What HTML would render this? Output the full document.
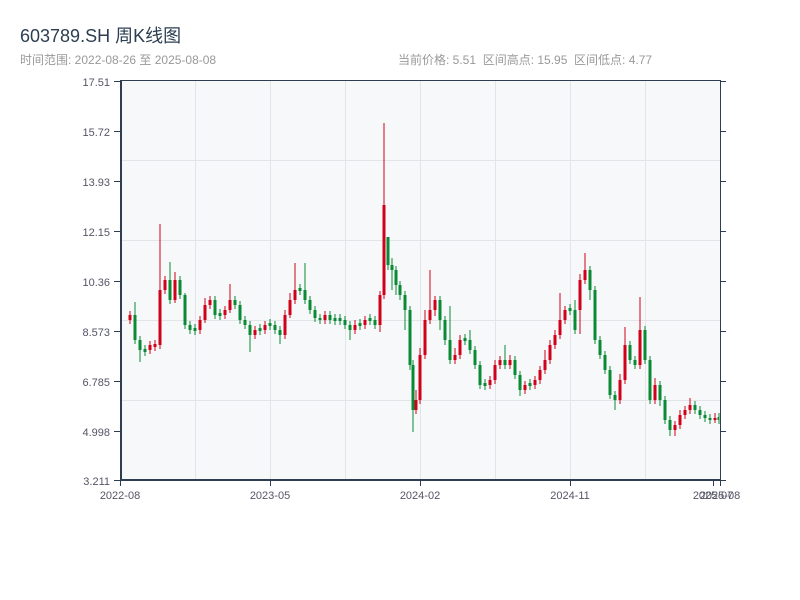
<!DOCTYPE html>
<html><head><meta charset="utf-8"><style>
body{margin:0;width:800px;height:600px;background:#fff;overflow:hidden;font-family:"Liberation Sans","Noto Sans CJK SC",sans-serif}
.t{position:absolute;left:20px;top:22px;font-size:18px;color:#2c3e50}
.s{position:absolute;top:51px;font-size:12px;color:#999}
svg{position:absolute;left:0;top:0}
</style></head><body>
<div class="t">603789.SH 周K线图</div>
<div class="s" style="left:20px">时间范围: 2022-08-26 至 2025-08-08</div>
<div class="s" style="left:398px">当前价格: 5.51 &nbsp;区间高点: 15.95 &nbsp;区间低点: 4.77</div>
<svg width="800" height="600" xmlns="http://www.w3.org/2000/svg" font-family="Liberation Sans, sans-serif" font-size="11" fill="#556">
<rect x="121" y="80" width="599" height="400" fill="#f7f8fa"/>
<g stroke="#e2e4e8" stroke-width="1">
<line x1="195.5" y1="80" x2="195.5" y2="480"/><line x1="270.5" y1="80" x2="270.5" y2="480"/><line x1="345.5" y1="80" x2="345.5" y2="480"/><line x1="420.5" y1="80" x2="420.5" y2="480"/><line x1="495.5" y1="80" x2="495.5" y2="480"/><line x1="570.5" y1="80" x2="570.5" y2="480"/><line x1="645.5" y1="80" x2="645.5" y2="480"/>
<line x1="121" y1="160.5" x2="720" y2="160.5"/><line x1="121" y1="240.5" x2="720" y2="240.5"/><line x1="121" y1="320.5" x2="720" y2="320.5"/><line x1="121" y1="400.5" x2="720" y2="400.5"/>
</g>
<path fill="#d0021b" d="
M128.5 315h3v5h-3z M129.5 311h1v13h-1z
M148.5 345h3v5h-3z M149.5 341h1v13h-1z
M153.5 344h3v3h-3z M154.5 340h1v11h-1z
M158.5 290h3v55h-3z M159.5 224h1v125h-1z
M163.5 280h3v10h-3z M164.5 276h1v18h-1z
M173.5 280h3v20h-3z M174.5 272h1v31h-1z
M198.5 320h3v10h-3z M199.5 316h1v18h-1z
M203.5 305h3v15h-3z M204.5 298h1v25h-1z
M208.5 300h3v5h-3z M209.5 296h1v13h-1z
M223.5 310h3v5h-3z M224.5 306h1v13h-1z
M228.5 300h3v10h-3z M229.5 284h1v29h-1z
M253.5 330h3v5h-3z M254.5 326h1v13h-1z
M263.5 325h3v5h-3z M264.5 321h1v13h-1z
M283.5 315h3v20h-3z M284.5 310h1v29h-1z
M288.5 300h3v15h-3z M289.5 293h1v25h-1z
M293.5 290h3v10h-3z M294.5 263h1v41h-1z
M323.5 315h3v5h-3z M324.5 311h1v13h-1z
M353.5 325h3v5h-3z M354.5 320h1v14h-1z
M363.5 320h3v5h-3z M364.5 316h1v13h-1z
M378.5 295h3v30h-3z M379.5 291h1v41h-1z
M382.5 205h3v90h-3z M383.5 123h1v176h-1z
M414.5 400h3v10h-3z M415.5 390h1v24h-1z
M418.5 355h3v45h-3z M419.5 348h1v56h-1z
M423.5 320h3v35h-3z M424.5 310h1v49h-1z
M428.5 310h3v10h-3z M429.5 270h1v54h-1z
M433.5 300h3v10h-3z M434.5 296h1v20h-1z
M453.5 355h3v5h-3z M454.5 348h1v16h-1z
M458.5 340h3v15h-3z M459.5 335h1v24h-1z
M488.5 380h3v5h-3z M489.5 376h1v13h-1z
M493.5 365h3v15h-3z M494.5 360h1v24h-1z
M498.5 360h3v5h-3z M499.5 356h1v13h-1z
M508.5 360h3v5h-3z M509.5 355h1v14h-1z
M523.5 385h3v5h-3z M524.5 381h1v13h-1z
M533.5 380h3v5h-3z M534.5 376h1v13h-1z
M538.5 370h3v10h-3z M539.5 366h1v18h-1z
M543.5 360h3v10h-3z M544.5 350h1v24h-1z
M548.5 345h3v15h-3z M549.5 340h1v24h-1z
M553.5 335h3v10h-3z M554.5 330h1v19h-1z
M558.5 320h3v15h-3z M559.5 293h1v46h-1z
M563.5 310h3v10h-3z M564.5 306h1v18h-1z
M578.5 280h3v30h-3z M579.5 274h1v60h-1z
M583.5 270h3v10h-3z M584.5 253h1v31h-1z
M618.5 380h3v20h-3z M619.5 374h1v30h-1z
M623.5 345h3v35h-3z M624.5 327h1v57h-1z
M638.5 330h3v35h-3z M639.5 297h1v72h-1z
M653.5 385h3v15h-3z M654.5 378h1v26h-1z
M673.5 425h3v5h-3z M674.5 421h1v15h-1z
M678.5 415h3v10h-3z M679.5 410h1v19h-1z
M683.5 410h3v5h-3z M684.5 406h1v13h-1z
M688.5 405h3v5h-3z M689.5 398h1v16h-1z
M713.5 418h3v2h-3z M714.5 413h1v10h-1z"/>
<path fill="#0a8a35" d="
M133.5 315h3v25h-3z M134.5 302h1v42h-1z
M138.5 340h3v10h-3z M139.5 336h1v26h-1z
M143.5 349h3v3h-3z M144.5 345h1v11h-1z
M168.5 280h3v20h-3z M169.5 262h1v42h-1z
M178.5 280h3v15h-3z M179.5 276h1v23h-1z
M183.5 295h3v30h-3z M184.5 293h1v36h-1z
M188.5 325h3v5h-3z M189.5 321h1v13h-1z
M193.5 328h3v3h-3z M194.5 324h1v11h-1z
M213.5 300h3v15h-3z M214.5 296h1v23h-1z
M218.5 313h3v3h-3z M219.5 309h1v11h-1z
M233.5 300h3v5h-3z M234.5 296h1v13h-1z
M238.5 305h3v15h-3z M239.5 301h1v23h-1z
M243.5 320h3v5h-3z M244.5 316h1v13h-1z
M248.5 325h3v10h-3z M249.5 321h1v31h-1z
M258.5 328h3v3h-3z M259.5 324h1v11h-1z
M268.5 323h3v3h-3z M269.5 319h1v11h-1z
M273.5 325h3v5h-3z M274.5 321h1v13h-1z
M278.5 330h3v5h-3z M279.5 326h1v18h-1z
M298.5 288h3v3h-3z M299.5 284h1v11h-1z
M303.5 290h3v10h-3z M304.5 263h1v41h-1z
M308.5 300h3v10h-3z M309.5 296h1v18h-1z
M313.5 310h3v8h-3z M314.5 306h1v16h-1z
M318.5 318h3v2h-3z M319.5 314h1v10h-1z
M328.5 315h3v5h-3z M329.5 311h1v13h-1z
M333.5 318h3v3h-3z M334.5 314h1v11h-1z
M338.5 318h3v3h-3z M339.5 314h1v11h-1z
M343.5 320h3v5h-3z M344.5 316h1v13h-1z
M348.5 325h3v5h-3z M349.5 321h1v19h-1z
M358.5 323h3v3h-3z M359.5 319h1v11h-1z
M368.5 318h3v3h-3z M369.5 314h1v11h-1z
M373.5 320h3v5h-3z M374.5 316h1v13h-1z
M386.5 237h3v28h-3z M387.5 237h1v33h-1z
M390.5 265h3v5h-3z M391.5 258h1v32h-1z
M394.5 270h3v15h-3z M395.5 266h1v29h-1z
M398.5 285h3v10h-3z M399.5 281h1v19h-1z
M403.5 295h3v15h-3z M404.5 291h1v39h-1z
M408.5 310h3v55h-3z M409.5 306h1v64h-1z
M411.5 365h3v45h-3z M412.5 360h1v72h-1z
M438.5 300h3v20h-3z M439.5 296h1v34h-1z
M443.5 320h3v20h-3z M444.5 316h1v29h-1z
M448.5 340h3v20h-3z M449.5 306h1v58h-1z
M463.5 338h3v3h-3z M464.5 334h1v11h-1z
M468.5 340h3v10h-3z M469.5 330h1v24h-1z
M473.5 350h3v15h-3z M474.5 346h1v23h-1z
M478.5 365h3v20h-3z M479.5 361h1v28h-1z
M483.5 383h3v3h-3z M484.5 379h1v11h-1z
M503.5 360h3v5h-3z M504.5 345h1v24h-1z
M513.5 360h3v15h-3z M514.5 356h1v23h-1z
M518.5 375h3v15h-3z M519.5 371h1v25h-1z
M528.5 383h3v3h-3z M529.5 379h1v11h-1z
M568.5 308h3v3h-3z M569.5 304h1v11h-1z
M573.5 310h3v20h-3z M574.5 300h1v34h-1z
M588.5 270h3v20h-3z M589.5 266h1v34h-1z
M593.5 290h3v50h-3z M594.5 286h1v58h-1z
M598.5 340h3v15h-3z M599.5 336h1v23h-1z
M603.5 355h3v15h-3z M604.5 351h1v23h-1z
M608.5 370h3v25h-3z M609.5 366h1v33h-1z
M613.5 395h3v5h-3z M614.5 391h1v19h-1z
M628.5 345h3v15h-3z M629.5 341h1v23h-1z
M633.5 360h3v5h-3z M634.5 356h1v13h-1z
M643.5 330h3v30h-3z M644.5 326h1v38h-1z
M648.5 360h3v40h-3z M649.5 356h1v48h-1z
M658.5 385h3v15h-3z M659.5 381h1v25h-1z
M663.5 400h3v20h-3z M664.5 396h1v28h-1z
M668.5 420h3v10h-3z M669.5 416h1v20h-1z
M693.5 405h3v5h-3z M694.5 401h1v13h-1z
M698.5 410h3v5h-3z M699.5 406h1v13h-1z
M703.5 415h3v3h-3z M704.5 411h1v11h-1z
M708.5 418h3v2h-3z M709.5 414h1v10h-1z
M717.5 417h2v3h-2z M718.5 413h1v11h-1z"/>
<g stroke="#2c3e50">
<line x1="121" y1="80" x2="121" y2="481" stroke-width="2"/>
<line x1="120" y1="480" x2="721" y2="480" stroke-width="2"/>
<line x1="720.5" y1="80" x2="720.5" y2="480"/>
<line x1="121" y1="80.5" x2="720" y2="80.5"/>
<line x1="114" y1="81.5" x2="121" y2="81.5"/><line x1="114" y1="131.5" x2="121" y2="131.5"/><line x1="114" y1="181.5" x2="121" y2="181.5"/><line x1="114" y1="231.5" x2="121" y2="231.5"/><line x1="114" y1="281.5" x2="121" y2="281.5"/><line x1="114" y1="331.5" x2="121" y2="331.5"/><line x1="114" y1="381.5" x2="121" y2="381.5"/><line x1="114" y1="431.5" x2="121" y2="431.5"/><line x1="114" y1="480.5" x2="121" y2="480.5"/>
<line x1="720" y1="81.5" x2="726" y2="81.5"/><line x1="720" y1="131.5" x2="726" y2="131.5"/><line x1="720" y1="181.5" x2="726" y2="181.5"/><line x1="720" y1="231.5" x2="726" y2="231.5"/><line x1="720" y1="281.5" x2="726" y2="281.5"/><line x1="720" y1="331.5" x2="726" y2="331.5"/><line x1="720" y1="381.5" x2="726" y2="381.5"/><line x1="720" y1="431.5" x2="726" y2="431.5"/><line x1="720" y1="480.5" x2="726" y2="480.5"/>
<line x1="120.5" y1="480" x2="120.5" y2="486"/><line x1="270.5" y1="480" x2="270.5" y2="486"/><line x1="420.5" y1="480" x2="420.5" y2="486"/><line x1="570.5" y1="480" x2="570.5" y2="486"/><line x1="713.5" y1="480" x2="713.5" y2="486"/><line x1="720.5" y1="480" x2="720.5" y2="486"/>
</g>
<g text-anchor="end">
<text x="110" y="86">17.51</text><text x="110" y="136">15.72</text><text x="110" y="186">13.93</text><text x="110" y="236">12.15</text><text x="110" y="286">10.36</text><text x="110" y="336">8.573</text><text x="110" y="386">6.785</text><text x="110" y="436">4.998</text><text x="110" y="485">3.211</text>
</g>
<g text-anchor="middle">
<text x="120" y="499">2022-08</text><text x="270" y="499">2023-05</text><text x="420" y="499">2024-02</text><text x="570" y="499">2024-11</text><text x="713" y="499">2025-07</text><text x="720" y="499">2025-08</text>
</g>
</svg>
</body></html>
